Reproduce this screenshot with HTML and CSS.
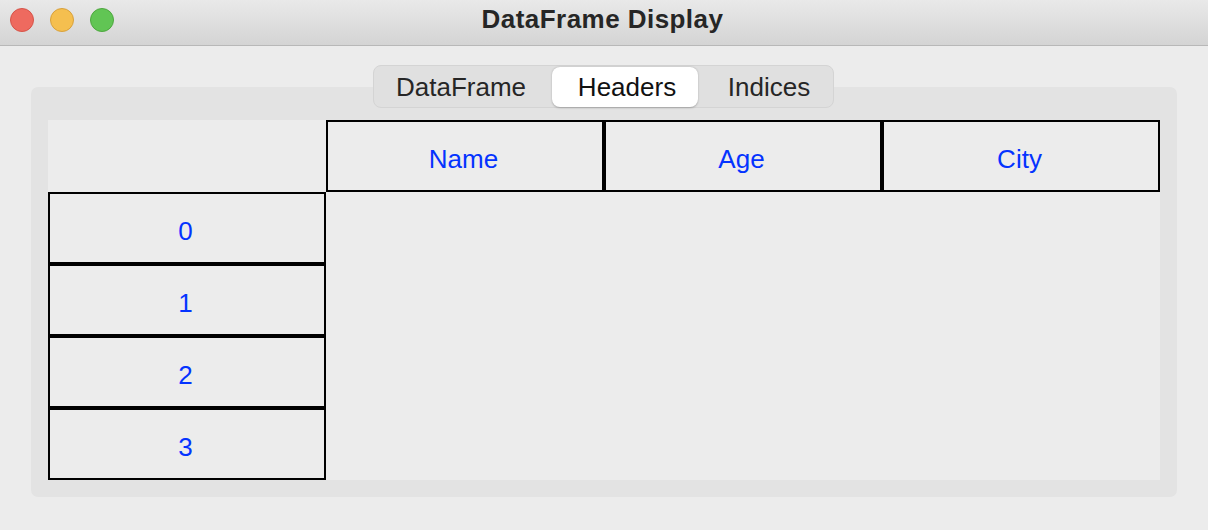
FILE: index.html
```html
<!DOCTYPE html>
<html>
<head>
<meta charset="utf-8">
<title>DataFrame Display</title>
<link rel="stylesheet" href="styles.css">
</head>
<body>
<div class="window">
  <div class="titlebar">
    <div class="lights">
      <span class="light red"></span>
      <span class="light yellow"></span>
      <span class="light green"></span>
    </div>
    <div class="title">DataFrame Display</div>
  </div>
  <div class="content">
    <div class="tabs">
      <div class="seg seg1">DataFrame</div>
      <div class="seg seg2 active">Headers</div>
      <div class="seg seg3">Indices</div>
    </div>
    <div class="panel">
      <div class="grid">
        <div class="corner"></div>
        <div class="cell hdr">Name</div>
        <div class="cell hdr">Age</div>
        <div class="cell hdr">City</div>
        <div class="cell idx">0</div>
        <div class="empty"></div><div class="empty"></div><div class="empty"></div>
        <div class="cell idx">1</div>
        <div class="empty"></div><div class="empty"></div><div class="empty"></div>
        <div class="cell idx">2</div>
        <div class="empty"></div><div class="empty"></div><div class="empty"></div>
        <div class="cell idx">3</div>
        <div class="empty"></div><div class="empty"></div><div class="empty"></div>
      </div>
    </div>
  </div>
</div>
</body>
</html>
```
FILE: styles.css
```css
* { box-sizing: border-box; }
html, body {
  margin: 0;
  padding: 0;
  background: #ececec;
}
body {
  width: 1208px;
  height: 530px;
  overflow: hidden;
  font-family: "Liberation Sans", Arial, sans-serif;
}
.window {
  width: 1208px;
  height: 530px;
  background: #ececec;
}
.titlebar {
  height: 46px;
  background: linear-gradient(#e9e9e9, #d4d4d4);
  border-bottom: 1px solid #b8b8b8;
  display: flex;
  align-items: center;
  justify-content: center;
  position: relative;
}
.lights {
  position: absolute;
  left: 10px;
  top: 8px;
  display: flex;
  gap: 16px;
}
.light {
  width: 24px;
  height: 24px;
  border-radius: 50%;
  display: block;
}
.red { background: #ee6a5f; border: 1px solid #d65449; }
.yellow { background: #f5bf4f; border: 1px solid #d8a13c; }
.green { background: #61c554; border: 1px solid #4ea73f; }
.title {
  font-weight: bold;
  font-size: 26px;
  color: #262626;
  margin-top: -6px;
  margin-left: -3px;
  letter-spacing: 0.45px;
}
.content {
  padding-top: 19px;
  display: flex;
  flex-direction: column;
  align-items: center;
}
.tabs {
  display: flex;
  height: 43px;
  padding: 1px;
  margin-left: -1px;
  background: #e0e0e0;
  border: 1px solid #d4d4d4;
  border-radius: 8px;
  margin-bottom: -21px;
  position: relative;
  z-index: 1;
}
.seg {
  height: 40px;
  display: flex;
  align-items: center;
  justify-content: center;
  font-size: 26px;
  color: #262626;
  border-radius: 8px;
}
.seg1 { width: 177px; padding-right: 5px; }
.seg2 { width: 146px; padding-left: 4px; }
.seg3 { width: 134px; padding-left: 8px; }
.seg.active {
  background: #ffffff;
  color: #111111;
  box-shadow: 0 0.5px 2px rgba(0,0,0,0.25);
}
.panel {
  width: 1146px;
  height: 410px;
  background: #e3e3e3;
  border-radius: 7px;
  padding: 33px 17px 17px 17px;
}
.grid {
  display: grid;
  grid-template-columns: repeat(4, 278px);
  grid-template-rows: repeat(5, 72px);
  background: #ececec;
}
.cell {
  border: 2px solid #000;
  display: flex;
  align-items: center;
  justify-content: center;
  font-size: 26px;
  color: #0433ff;
}
.hdr { padding-top: 6px; padding-right: 3px; }
.idx { padding-top: 6px; padding-right: 3px; }
```
